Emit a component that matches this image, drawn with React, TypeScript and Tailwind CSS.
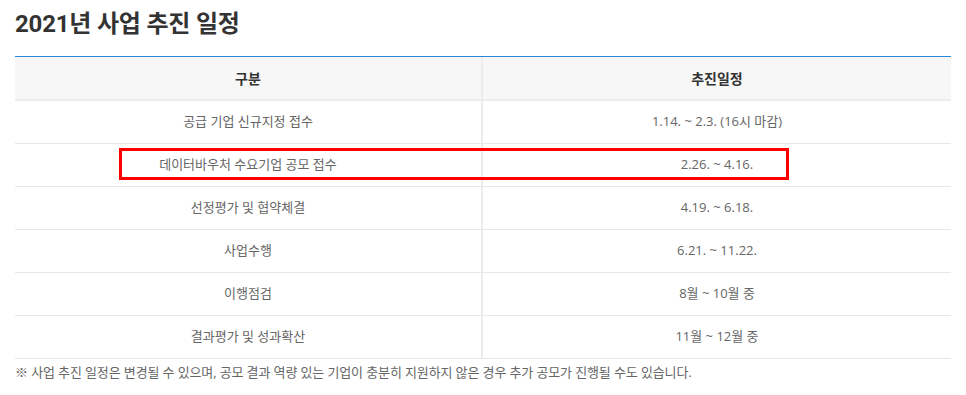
import React from "react";

const rows: [string, string][] = [
  ["공급 기업 신규지정 접수", "1.14. ~ 2.3. (16시 마감)"],
  ["데이터바우처 수요기업 공모 접수", "2.26. ~ 4.16."],
  ["선정평가 및 협약체결", "4.19. ~ 6.18."],
  ["사업수행", "6.21. ~ 11.22."],
  ["이행점검", "8월 ~ 10월 중"],
  ["결과평가 및 성과확산", "11월 ~ 12월 중"],
];

export default function App() {
  return (
    <div className="w-[966px] h-[395px] bg-white pl-[15px] pr-[15px] pt-[8px] font-['Open_Sans','Noto_Sans_CJK_KR',sans-serif]">
      <h1 className="text-[24px] leading-[32px] font-bold text-[#333] font-['Roboto','Noto_Sans_CJK_KR',sans-serif] tracking-[-0.2px]">
        2021년 사업 추진 일정
      </h1>
      <div className="relative mt-[16px] w-[936px]">
        <div className="border-t border-[#2a86d6]">
          <div className="grid grid-cols-2 h-[44px] bg-[#f7f7f7] border-b-2 border-[#ececec]">
            <div className="flex items-center justify-center text-[14px] font-bold text-[#333] border-r-2 border-[#ececec]">
              구분
            </div>
            <div className="flex items-center justify-center text-[14px] font-bold text-[#333]">
              추진일정
            </div>
          </div>
          {rows.map(([a, b], i) => (
            <div
              key={i}
              className="grid grid-cols-2 h-[43px] border-b border-[#e8e8e8]"
            >
              <div className="flex items-center justify-center text-[13px] text-[#666] border-r-2 border-[#ececec]">
                {a}
              </div>
              <div className="flex items-center justify-center text-[13px] text-[#666]">
                {b}
              </div>
            </div>
          ))}
        </div>
        <div className="absolute left-[104px] top-[92px] w-[670px] h-[32px] border-[3px] border-[#ff0000]" />
      </div>
      <p className="mt-[3px] text-[13px] leading-[20px] text-[#666] tracking-[-0.12px]">
        ※ 사업 추진 일정은 변경될 수 있으며, 공모 결과 역량 있는 기업이 충분히 지원하지 않은 경우 추가 공모가 진행될 수도 있습니다.
      </p>
    </div>
  );
}
